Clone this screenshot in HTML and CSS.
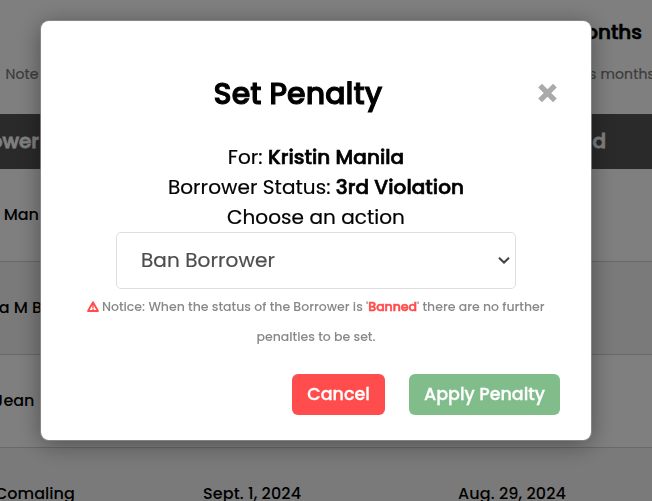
FILE: index.html
```html
<!DOCTYPE html>
<html lang="en">
<head>
<meta charset="utf-8">
<title>Set Penalty</title>
<link rel="stylesheet" href="styles.css">
</head>
<body>
<main class="page">
  <header class="page-head">
    <h2 class="page-title">onths</h2>
    <div class="page-note"><span>Note</span><span class="note-end">s months</span></div>
  </header>
  <div class="row row-head"><span class="cell-name">ower</span><span class="cell-end">d</span></div>
  <div class="row"><span class="cell-name">Man</span></div>
  <div class="row row-alt"><span class="cell-name name-2">a M B</span></div>
  <div class="row"><span class="cell-name name-3">Jean</span></div>
  <div class="row row-alt row-last"><span class="cell-name name-4">Comaling</span><span class="cell-date">Sept. 1, 2024</span><span class="cell-due">Aug. 29, 2024</span></div>
</main>
<div class="overlay">
  <section class="modal" role="dialog">
    <header class="modal-head">
      <h1 class="modal-title">Set Penalty</h1>
      <button class="close" aria-label="Close"><svg width="20" height="20" viewBox="0 0 20 20"><path d="M3.1 2.6L17.9 17.4M17.9 2.6L3.1 17.4" fill="none" stroke="#aaa" stroke-width="5.3"/></svg></button>
    </header>
    <div class="details">
      <p class="line-for">For: <b>Kristin Manila</b></p>
      <p class="line-status">Borrower Status: <b>3rd Violation</b></p>
      <p class="line-action">Choose an action</p>
    </div>
    <div class="select"><span>Ban Borrower</span><svg width="12" height="8" viewBox="0 0 12 8"><path d="M1 1.8L6 6.6L11 1.8" fill="none" stroke="#444" stroke-width="2.1"/></svg></div>
    <div class="notice">
      <p class="notice-1"><svg class="warn" width="12" height="11" viewBox="0 0 12 11"><path d="M6 1.2L11 10H1Z" fill="none" stroke="#ff4d4d" stroke-width="1.8" stroke-linejoin="round"/><path d="M6 3V7M6 7.5V9.5" stroke="#ff4d4d" stroke-width="1.4"/></svg>Notice: When the status of the Borrower is '<b>Banned</b>' there are no further</p>
      <p class="notice-2">penalties to be set.</p>
    </div>
    <footer class="actions">
      <button class="btn cancel"><span>Cancel</span></button>
      <button class="btn apply"><span>Apply Penalty</span></button>
    </footer>
  </section>
</div>
</body>
</html>
```
FILE: styles.css
```css
* { box-sizing: border-box; }
body { margin: 0; height: 501px; overflow: hidden; background: #fff; font-family: Poppins, Inter, sans-serif; color: #000; }
h1, h2, p { margin: 0; }
button { border: 0; padding: 0; font-family: inherit; }
.page { height: 501px; overflow: hidden; }
.page-head { height: 114px; padding-top: 17px; }
.page-title { font-size: 20px; line-height: 30px; font-weight: 500; -webkit-text-stroke: .7px; padding-right: 10px; text-align: right; }
.page-note { display: flex; justify-content: space-between; margin-top: 16px; padding-left: 5.5px; font-size: 14px; line-height: 22px; letter-spacing: .15px; color: #787878; -webkit-text-stroke: .2px; white-space: nowrap; }
.note-end { margin-right: -3px; }
.row { display: grid; grid-template-columns: 39px 164px 255px 1fr; align-items: center; height: 93px; padding-bottom: 1px; border-bottom: 1px solid #d0d0d0; font-size: 16px; font-weight: 500; white-space: nowrap; }
.row-head { height: 55px; border: 0; background: #545454; color: #fff; font-size: 20px; -webkit-text-stroke: .8px; }
.row-alt { background: #f5f5f5; }
.cell-name { justify-self: end; }
.name-2 { margin-right: -3px; }
.name-3 { margin-right: 4.5px; }
.name-4 { justify-self: start; margin-left: -5px; }
.cell-end { grid-column: 4; margin-left: 134.5px; }
.cell-date { grid-column: 3; letter-spacing: .1px; }
.cell-due { grid-column: 4; letter-spacing: .1px; }
.overlay { position: fixed; inset: 0; padding: 21px 61px 0 41px; background: rgba(0, 0, 0, .5); }
.modal { width: 550px; height: 419px; padding-top: 43px; border-radius: 8px; background: #fff; box-shadow: 0 0 0 1px rgba(140, 140, 140, .8), 0 4px 24px rgba(0, 0, 0, .4); }
.modal-head { display: grid; grid-template-columns: 172.5px 170px 1fr; align-items: center; height: 60px; }
.modal-title { grid-column: 2; font-size: 30px; font-weight: 500; -webkit-text-stroke: 1px; line-height: 60px; letter-spacing: .03px; white-space: nowrap; }
.close { justify-self: end; display: flex; margin: -2px 34px 0 0; background: none; }
.details { margin-top: 18px; text-align: center; font-size: 20px; line-height: 30px; letter-spacing: .05px; }
.details p { white-space: nowrap; }
.line-for, .line-status, .line-action, .select { -webkit-text-stroke: .2px; }
.details b { font-weight: 500; -webkit-text-stroke: .7px; }
.select { display: flex; justify-content: space-between; align-items: center; width: 400px; height: 57px; margin: 0 0 0 75px; padding: 0 5px 2px 24px; border: 1px solid #dedede; border-radius: 5px; font-size: 20px; letter-spacing: .08px; color: #4d4d4d; }
.notice { margin-top: 3px; text-align: center; font-size: 12.5px; font-weight: 500; line-height: 30px; color: #888; }
.notice p { white-space: nowrap; }
.notice b { color: #ff4d4d; font-weight: 500; -webkit-text-stroke: .6px; }
.warn { margin-right: 2.5px; vertical-align: -1px; }
.actions { display: flex; justify-content: flex-end; gap: 24px; margin-top: 22px; padding-right: 31px; }
.btn { height: 41px; padding-bottom: 1px; border-radius: 6px; color: #fff; font-size: 17.5px; font-weight: 500; -webkit-text-stroke: .3px; white-space: nowrap; }
.cancel { width: 93px; background: #ff4d4d; }
.apply { width: 151px; background: #80bd8b; }
```
